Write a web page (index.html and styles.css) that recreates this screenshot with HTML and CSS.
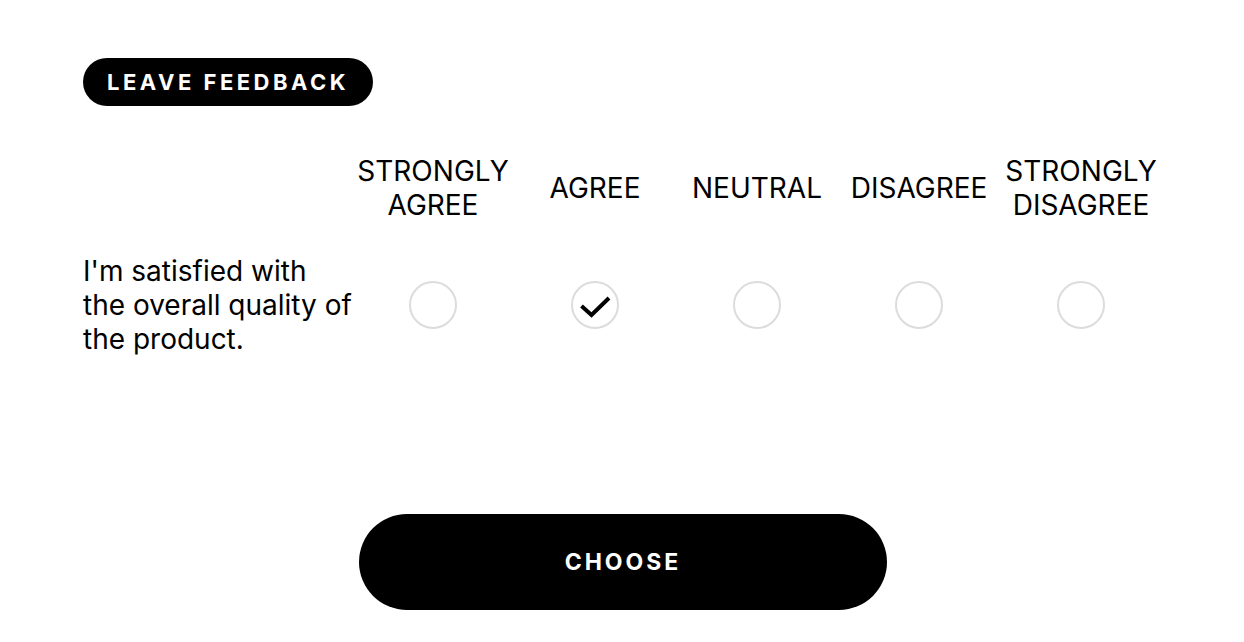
FILE: index.html
```html
<!DOCTYPE html>
<html lang="en">
<head>
  <meta charset="UTF-8" />
  <title>Leave feedback</title>
  <link rel="stylesheet" href="styles.css">
</head>
<body>
  <div class="container">
    <div class="badge">LEAVE FEEDBACK</div>

    <div class="survey">
      <div class="corner"></div>
      <div class="head">STRONGLY<br>AGREE</div>
      <div class="head">AGREE</div>
      <div class="head">NEUTRAL</div>
      <div class="head">DISAGREE</div>
      <div class="head">STRONGLY<br>DISAGREE</div>

      <div class="question">I'm satisfied with the overall quality of the product.</div>
      <label class="cell"><input type="radio" name="q1" value="1"><span class="dot"></span></label>
      <label class="cell">
        <input type="radio" name="q1" value="2" checked>
        <span class="dot">
          <svg class="tick" viewBox="0 0 44 44" width="44" height="44"><polyline points="8.5,23 18.5,32 36,15" /></svg>
        </span>
      </label>
      <label class="cell"><input type="radio" name="q1" value="3"><span class="dot"></span></label>
      <label class="cell"><input type="radio" name="q1" value="4"><span class="dot"></span></label>
      <label class="cell"><input type="radio" name="q1" value="5"><span class="dot"></span></label>
    </div>

    <div class="actions">
      <button type="button">CHOOSE</button>
    </div>
  </div>
</body>
</html>
```

FILE: styles.css
```css
body {
  margin: 0;
  padding: 0;
  background: #fff;
  color: #000;
  font-family: Inter, 'Noto Sans', sans-serif;
}
.container {
  padding: 58px 82px 0 83px;
}
.badge {
  display: inline-block;
  background: #000;
  color: #fff;
  font-weight: 700;
  font-size: 22px;
  letter-spacing: 3.5px;
  line-height: 48px;
  height: 48px;
  padding: 0 24px;
  border-radius: 24px;
}
.survey {
  display: grid;
  grid-template-columns: 269px repeat(5, 162px);
  row-gap: 32px;
  margin-top: 48px;
  font-size: 28px;
  line-height: 34px;
}
.head {
  display: flex;
  align-items: center;
  justify-content: center;
  text-align: center;
  white-space: nowrap;
}
.cell {
  display: flex;
  align-items: center;
  justify-content: center;
  cursor: pointer;
}
.cell input {
  display: none;
}
.dot {
  display: block;
  width: 44px;
  height: 44px;
  border: 2px solid #dcdcdc;
  border-radius: 50%;
}
.tick {
  display: none;
  fill: none;
  stroke: #000;
  stroke-width: 4;
}
.cell input:checked + .dot .tick {
  display: block;
}
.actions {
  display: flex;
  justify-content: center;
  margin-top: 158px;
  margin-left: -82px;
  margin-right: -83px;
}
button {
  width: 528px;
  height: 96px;
  border: none;
  border-radius: 48px;
  background: #000;
  color: #fff;
  font-family: inherit;
  font-weight: 700;
  font-size: 23px;
  letter-spacing: 3px;
  cursor: pointer;
}
```
